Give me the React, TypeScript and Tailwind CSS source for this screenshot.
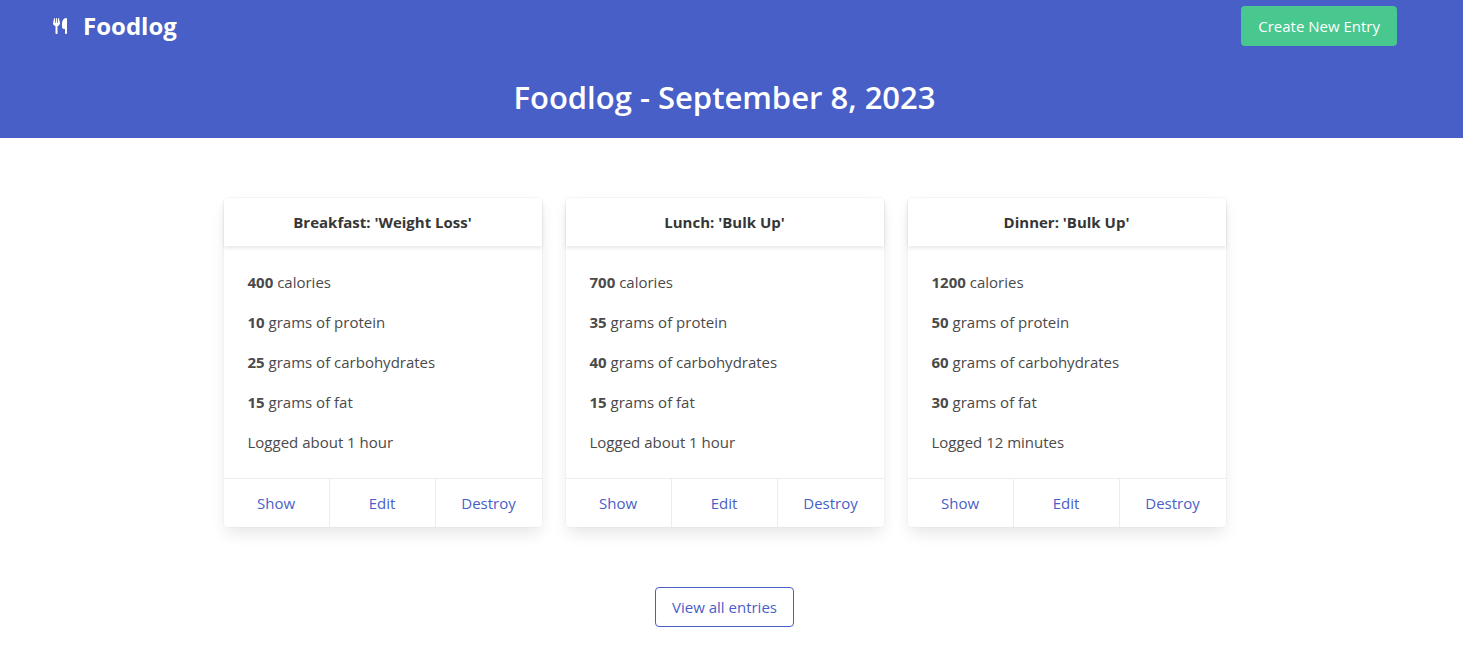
import React from "react";
import { FaUtensils } from "react-icons/fa6";

type Entry = {
  title: string;
  calories: number;
  protein: number;
  carbohydrates: number;
  fat: number;
  logged: string;
};

const entries: Entry[] = [
  { title: "Breakfast: 'Weight Loss'", calories: 400, protein: 10, carbohydrates: 25, fat: 15, logged: "about 1 hour" },
  { title: "Lunch: 'Bulk Up'", calories: 700, protein: 35, carbohydrates: 40, fat: 15, logged: "about 1 hour" },
  { title: "Dinner: 'Bulk Up'", calories: 1200, protein: 50, carbohydrates: 60, fat: 30, logged: "12 minutes" },
];

function Fact({ amount, label }: { amount: number; label: string }) {
  return (
    <p>
      <strong className="font-bold">{amount}</strong> {label}
    </p>
  );
}

function EntryCard({ entry }: { entry: Entry }) {
  return (
    <article className="rounded bg-white shadow-[0_8px_16px_-2px_rgba(10,10,10,0.1),0_0_0_1px_rgba(10,10,10,0.02)]">
      <h2 className="rounded-t px-4 py-3 text-center font-bold text-[#363636] shadow-[0_2px_4px_rgba(10,10,10,0.1)]">
        {entry.title}
      </h2>
      <div className="flex flex-col gap-4 p-6">
        <Fact amount={entry.calories} label="calories" />
        <Fact amount={entry.protein} label="grams of protein" />
        <Fact amount={entry.carbohydrates} label="grams of carbohydrates" />
        <Fact amount={entry.fat} label="grams of fat" />
        <p>Logged {entry.logged}</p>
      </div>
      <footer className="grid grid-cols-3 divide-x divide-[#ededed] border-t border-[#ededed] text-center text-[#485fc7]">
        {["Show", "Edit", "Destroy"].map((action) => (
          <a key={action} href="#" className="py-3 hover:text-[#363636]">
            {action}
          </a>
        ))}
      </footer>
    </article>
  );
}

export default function App() {
  return (
    <div className="font-['Open_Sans','Noto_Sans',sans-serif] text-[15px] leading-6 text-[#4a4a4a]">
      <header className="bg-[#485fc7] pr-3.5 text-white">
        <nav className="flex h-[52px] items-center justify-between pr-[52px] pl-[53px]">
          <a href="#" className="flex items-center gap-4 text-2xl leading-8 font-bold">
            <FaUtensils className="h-4 w-3.5" aria-hidden="true" />
            Foodlog
          </a>
          <a href="#" className="flex h-10 items-center rounded border border-transparent bg-[#48c78e] px-4">
            Create New Entry
          </a>
        </nav>
        <h1 className="px-6 pt-6 pb-5 text-center text-[31px] leading-[42px] font-semibold">
          Foodlog - September 8, 2023
        </h1>
      </header>
      <main className="flex flex-col items-center gap-15 py-15 pr-3.5">
        <section className="grid w-full max-w-[1002px] grid-cols-3 gap-6">
          {entries.map((entry) => (
            <EntryCard key={entry.title} entry={entry} />
          ))}
        </section>
        <a href="#" className="flex h-10 items-center rounded border border-[#485fc7] px-4 text-[#485fc7]">
          View all entries
        </a>
      </main>
    </div>
  );
}
